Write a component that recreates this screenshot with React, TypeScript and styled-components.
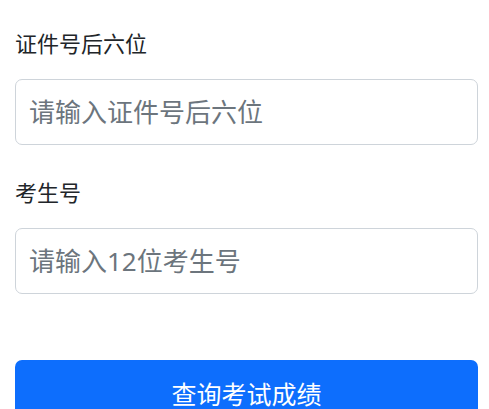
import styled, { createGlobalStyle } from 'styled-components';

const GlobalStyle = createGlobalStyle`
    body {
        margin: 0;
        background: #fff;
        font-family: "Noto Sans", "Noto Sans CJK SC", sans-serif;
        color: #212529;
    }
`;

const fields = [
    { label: '证件号后六位', placeholder: '请输入证件号后六位' },
    { label: '考生号', placeholder: '请输入12位考生号' },
];

const App = () => {
    return (
        <>
            <GlobalStyle />
            <Form onSubmit={(e) => e.preventDefault()}>
                {fields.map((field, i) => (
                    <Field key={i}>
                        <Label>{field.label}</Label>
                        <Input placeholder={field.placeholder} />
                    </Field>
                ))}
                <SubmitButton type="submit">查询考试成绩</SubmitButton>
            </Form>
        </>
    );
};

const Form = styled.form`
    display: flex;
    flex-direction: column;
    padding: 28px 11px 0 15px;
`;

const Field = styled.div`
    display: flex;
    flex-direction: column;
    margin-bottom: 32px;
`;

const Label = styled.label`
    font-size: 22px;
    line-height: 30px;
    margin-bottom: 21px;
    color: #212529;
`;

const Input = styled.input`
    box-sizing: border-box;
    height: 66px;
    padding: 0 13px;
    font-family: inherit;
    font-size: 26px;
    color: #212529;
    border: 1px solid #ced4da;
    border-radius: 7px;
    outline: none;

    &::placeholder {
        color: #6c757d;
    }
`;

const SubmitButton = styled.button`
    margin-top: 34px;
    height: 66px;
    border: none;
    border-radius: 7px;
    background: #0d6efd;
    color: #fff;
    font-family: inherit;
    font-size: 25px;
`;

export default App;
